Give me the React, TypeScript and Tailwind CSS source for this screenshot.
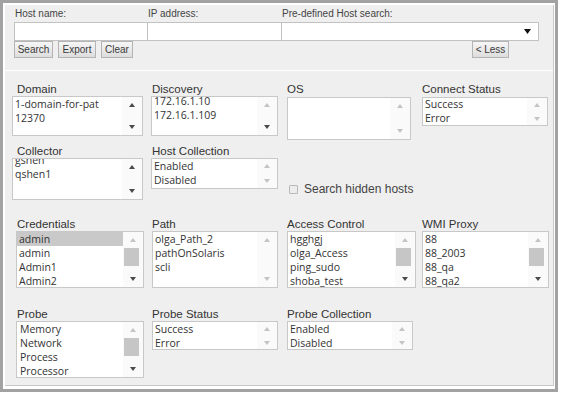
import React from 'react';

const LBL = "font-['Liberation_Sans',Arial,sans-serif]";
const ITEM = "font-['Open_Sans','Noto_Sans',sans-serif]";

function Arrow({ dir, dark }: { dir: 'up' | 'down'; dark?: boolean }) {
  return (
    <svg width="6" height="4" viewBox="0 0 6 4" className={dark ? 'fill-[#4a4a4a]' : 'fill-[#c4c4c4]'}>
      {dir === 'up' ? <polygon points="3,0 6,4 0,4" /> : <polygon points="0,0 6,0 3,4" />}
    </svg>
  );
}

type LBProps = {
  box: string;
  items: string[];
  scroll?: string;
  selected?: number;
  thumb?: boolean;
  up?: boolean;
  down?: boolean;
  cell?: string;
};

function ListBox({ box, items, scroll = '', selected = -1, thumb = false, up = false, down = false, cell = 'h-[16px]' }: LBProps) {
  return (
    <div className={`${box} shrink-0 flex bg-white border border-[#c8c8c8] overflow-hidden`}>
      <div className="flex-1 min-w-0 overflow-hidden">
        <div className={scroll}>
          {items.map((t, i) => (
            <div
              key={i}
              className={`h-[14px] leading-[14px] pl-[2px] whitespace-nowrap text-[10.5px] text-[#333] ${ITEM} ${i === selected ? 'bg-[#c9c9c9]' : ''}`}
            >
              {t}
            </div>
          ))}
        </div>
      </div>
      <div className="w-[20px] shrink-0 flex flex-col bg-[#fafafa]">
        <div className={`${cell} flex items-center justify-center`}>
          <Arrow dir="up" dark={up} />
        </div>
        <div className="flex-1 pl-[1px]">{thumb && <div className="w-[15px] h-[18px] bg-[#c6c6c6]" />}</div>
        <div className={`${cell} flex items-center justify-center`}>
          <Arrow dir="down" dark={down} />
        </div>
      </div>
    </div>
  );
}

function Label({ children }: { children: React.ReactNode }) {
  return <div className={`h-[14px] leading-[14px] text-[11.5px] text-[#333] whitespace-nowrap ${LBL}`}>{children}</div>;
}

function Col({ children }: { children?: React.ReactNode }) {
  return <div className="w-[135px] shrink-0 flex flex-col">{children}</div>;
}

function Btn({ w, children }: { w: string; children: React.ReactNode }) {
  return (
    <div
      className={`${w} h-[17px] flex items-center justify-center border border-[#b4b4b4] bg-gradient-to-b from-[#f6f6f6] to-[#dddddd] text-[10px] text-[#3a3a3a] ${LBL}`}
    >
      {children}
    </div>
  );
}

export default function App() {
  return (
    <div className="w-[564px] h-[398px] bg-white">
      <div className="w-[558px] h-[392px] border-[3px] border-[#a2a2a2] bg-white">
        <div className="ml-[2px] mt-[2px] w-[549px] h-[381px] bg-[#efefef] border-r border-b border-[#c9c9c9] flex flex-col">
          {/* Header */}
          <div className="h-[66px] border-b border-white pl-[9px] pt-[3px] shrink-0">
            <div className={`flex h-[14px] text-[10px] leading-[12px] text-[#444] ${LBL}`}>
              <div className="w-[134px] pl-[1px]">Host name:</div>
              <div className="w-[134px]">IP address:</div>
              <div className="w-[257px]">Pre-defined Host search:</div>
            </div>
            <div className="flex h-[19px]">
              <div className="w-[134px] h-[19px] bg-white border border-[#c2c2c2]" />
              <div className="w-[134px] h-[19px] bg-white border border-l-0 border-[#c2c2c2]" />
              <div className="w-[257px] h-[19px] bg-white border border-l-0 border-[#c2c2c2] flex items-center justify-end pr-[7px]">
                <svg width="7" height="5" viewBox="0 0 7 5" className="fill-[#111]">
                  <polygon points="0,0 7,0 3.5,5" />
                </svg>
              </div>
            </div>
            <div className="w-[495px] flex justify-between">
              <div className="flex gap-[5px]">
                <Btn w="w-[39px]">Search</Btn>
                <Btn w="w-[38px]">Export</Btn>
                <Btn w="w-[32px]">Clear</Btn>
              </div>
              <Btn w="w-[37px]">&lt; Less</Btn>
            </div>
          </div>

          {/* Lower grid */}
          <div className="flex flex-col pl-[12px] pt-[11px]">
            {/* Row 1 */}
            <div className="flex h-[62px]">
              <Col>
                <Label>Domain</Label>
                <ListBox box="-ml-[5px] w-[131px] h-[40px]" items={['1-domain-for-pat', '12370']} up down />
              </Col>
              <Col>
                <Label>Discovery</Label>
                <ListBox box="-ml-[1px] w-[127px] h-[40px]" items={['172.16.1.10', '172.16.1.109']} scroll="-mt-[3px]" down />
              </Col>
              <Col>
                <Label>OS</Label>
                <ListBox box="mt-[1px] w-[124px] h-[43px]" items={[]} />
              </Col>
              <Col>
                <Label>Connect Status</Label>
                <ListBox box="mt-[1px] w-[126px] h-[29px]" items={['Success', 'Error']} scroll="-mt-[1px]" cell="h-[13px]" />
              </Col>
            </div>

            {/* Row 2 */}
            <div className="flex h-[73px]">
              <Col>
                <Label>Collector</Label>
                <ListBox box="-ml-[5px] w-[131px] h-[42px]" items={['gshen', 'qshen1', '']} scroll="-mt-[6px]" up down />
              </Col>
              <Col>
                <Label>Host Collection</Label>
                <ListBox box="-ml-[1px] w-[127px] h-[31px]" items={['Enabled', 'Disabled']} cell="h-[14px]" />
              </Col>
              <Col>
                <div className="mt-[38px] ml-[2px] flex items-center">
                  <div className="w-[9px] h-[9px] border border-[#b9b9b9] bg-[#ececec] rounded-[1px]" />
                  <span className={`ml-[6px] text-[12px] leading-[14px] text-[#444] ${LBL}`}>Search hidden hosts</span>
                </div>
              </Col>
              <Col />
            </div>

            {/* Row 3 */}
            <div className="flex h-[90px]">
              <Col>
                <Label>Credentials</Label>
                <ListBox
                  box="-ml-[1px] w-[128px] h-[57px]"
                  items={['admin', 'admin', 'Admin1', 'Admin2']}
                  selected={0}
                  thumb
                  down
                />
              </Col>
              <Col>
                <Label>Path</Label>
                <ListBox box="w-[126px] h-[57px]" items={['olga_Path_2', 'pathOnSolaris', 'scli']} />
              </Col>
              <Col>
                <Label>Access Control</Label>
                <ListBox box="w-[129px] h-[57px]" items={['hgghgj', 'olga_Access', 'ping_sudo', 'shoba_test']} thumb down />
              </Col>
              <Col>
                <Label>WMI Proxy</Label>
                <ListBox box="w-[127px] h-[57px]" items={['88', '88_2003', '88_qa', '88_qa2']} thumb down />
              </Col>
            </div>

            {/* Row 4 */}
            <div className="flex">
              <Col>
                <Label>Probe</Label>
                <ListBox
                  box="-ml-[1px] w-[128px] h-[57px]"
                  items={['Memory', 'Network', 'Process', 'Processor']}
                  scroll="pl-[1px]"
                  thumb
                  down
                />
              </Col>
              <Col>
                <Label>Probe Status</Label>
                <ListBox box="w-[126px] h-[29px]" items={['Success', 'Error']} cell="h-[13px]" />
              </Col>
              <Col>
                <Label>Probe Collection</Label>
                <ListBox box="w-[126px] h-[29px]" items={['Enabled', 'Disabled']} cell="h-[13px]" />
              </Col>
            </div>
          </div>
        </div>
      </div>
    </div>
  );
}
